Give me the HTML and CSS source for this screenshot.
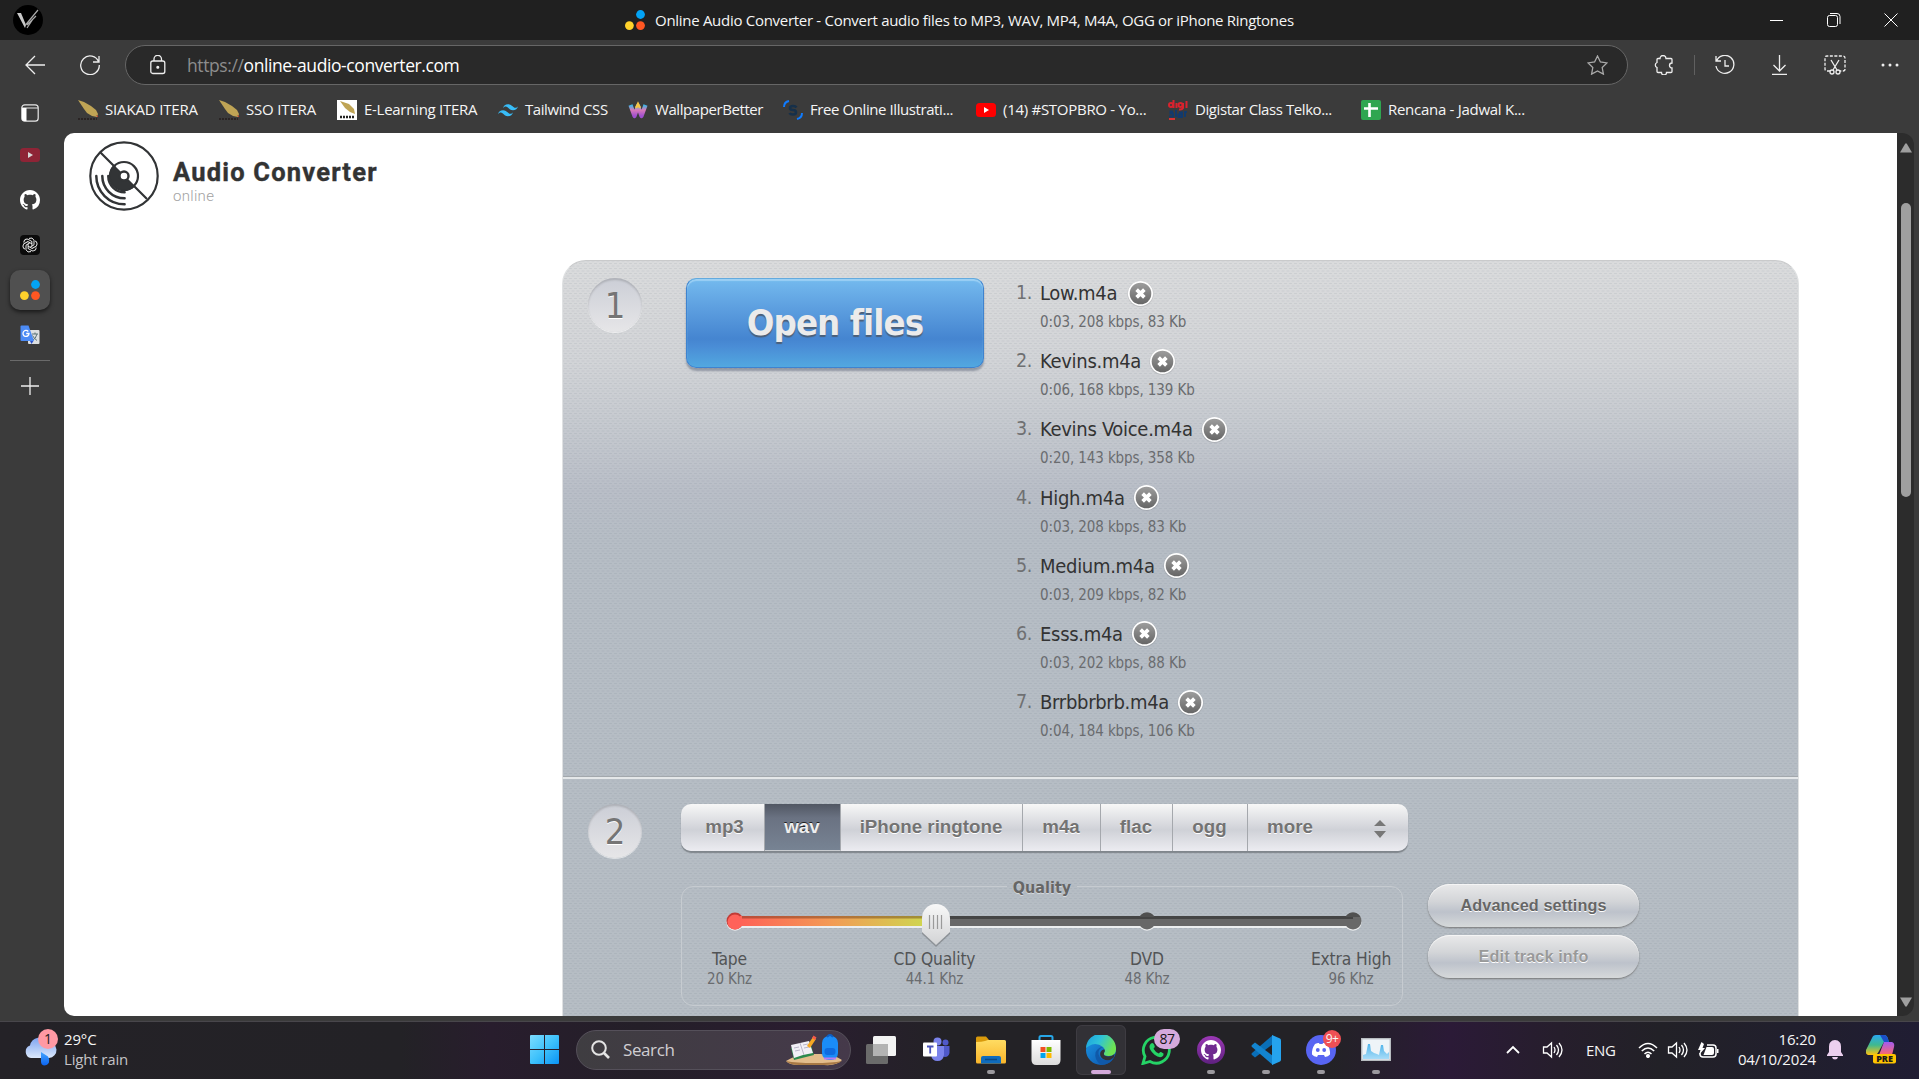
FILE: index.html
```html
<!DOCTYPE html>
<html lang="en">
<head>
<meta charset="utf-8">
<title>Online Audio Converter</title>
<link rel="stylesheet" href="styles.css">
</head>
<body>
<svg width="0" height="0" class="defs">
  <defs>
    <linearGradient id="closeFill" x1="0" y1="0" x2="0" y2="1"><stop offset="0" stop-color="#9d9d9d"/><stop offset="1" stop-color="#666"/></linearGradient>
    <linearGradient id="winFill" x1="0" y1="0" x2="1" y2="1"><stop offset="0" stop-color="#7ddcff"/><stop offset=".5" stop-color="#3fc2fb"/><stop offset="1" stop-color="#0a93f5"/></linearGradient>
    <linearGradient id="cloudFill" x1="0" y1="0" x2="0" y2="1"><stop offset="0" stop-color="#7ea4f0"/><stop offset="1" stop-color="#dbe8fb"/></linearGradient>
    <linearGradient id="dropFill" x1="0" y1="0" x2="0" y2="1"><stop offset="0" stop-color="#43a5ff"/><stop offset="1" stop-color="#0b63f0"/></linearGradient>
    <linearGradient id="folderFill" x1="0" y1="0" x2="0" y2="1"><stop offset="0" stop-color="#ffdc62"/><stop offset="1" stop-color="#f9b52a"/></linearGradient>
    <linearGradient id="storeFill" x1="0" y1="0" x2="0" y2="1"><stop offset="0" stop-color="#fff"/><stop offset="1" stop-color="#dcdcdc"/></linearGradient>
    <linearGradient id="edgeTop" x1="0" y1="0" x2="1" y2=".4"><stop offset="0" stop-color="#1a9ee0"/><stop offset=".5" stop-color="#2fc3d8"/><stop offset="1" stop-color="#6ee453"/></linearGradient>
    <linearGradient id="edgeLow" x1="0" y1="0" x2="1" y2="1"><stop offset="0" stop-color="#1b98e6"/><stop offset="1" stop-color="#0c4fa8"/></linearGradient>
    <linearGradient id="wpFill" x1="0" y1="0" x2="0" y2="1"><stop offset="0" stop-color="#35b8e8"/><stop offset=".45" stop-color="#d97ab9"/><stop offset="1" stop-color="#a04fd0"/></linearGradient>
    <linearGradient id="handleFill" x1="0" y1="0" x2="0" y2="1"><stop offset="0" stop-color="#f8f8f8"/><stop offset="1" stop-color="#d2d3d5"/></linearGradient>
    <linearGradient id="coA" x1="0" y1="0" x2="0" y2="1"><stop offset="0" stop-color="#2aa8f0"/><stop offset=".5" stop-color="#3fb98f"/><stop offset="1" stop-color="#ffc20e"/></linearGradient>
    <linearGradient id="coB" x1="0" y1="0" x2="0" y2="1"><stop offset="0" stop-color="#a25bf0"/><stop offset="1" stop-color="#ff6a6a"/></linearGradient>
    <linearGradient id="chartFill" x1="0" y1="0" x2="0" y2="1"><stop offset="0" stop-color="#4fb4ea"/><stop offset="1" stop-color="#a8dcf8"/></linearGradient>
    <linearGradient id="ghFill" x1="0" y1="0" x2="0" y2="1"><stop offset="0" stop-color="#9b38b5"/><stop offset="1" stop-color="#5f2180"/></linearGradient>
    <symbol id="cat" viewBox="0 0 16 16"><path d="M8 0C3.58 0 0 3.58 0 8c0 3.54 2.29 6.53 5.47 7.59.4.07.55-.17.55-.38 0-.19-.01-.82-.01-1.49-2.01.37-2.53-.49-2.69-.94-.09-.23-.48-.94-.82-1.13-.28-.15-.68-.52-.01-.53.63-.01 1.08.58 1.23.82.72 1.21 1.87.87 2.33.66.07-.52.28-.87.51-1.07-1.78-.2-3.64-.89-3.64-3.95 0-.87.31-1.59.82-2.15-.08-.2-.36-1.02.08-2.12 0 0 .67-.21 2.2.82.64-.18 1.32-.27 2-.27s1.36.09 2 .27c1.53-1.04 2.2-.82 2.2-.82.44 1.1.16 1.92.08 2.12.51.56.82 1.27.82 2.15 0 3.07-1.87 3.75-3.65 3.95.29.25.54.73.54 1.48 0 1.07-.01 1.93-.01 2.2 0 .21.15.46.55.38A8.01 8.01 0 0 0 16 8c0-4.42-3.58-8-8-8z"/></symbol>
    <symbol id="dots" viewBox="0 0 20 20"><circle cx="15.500" cy="4.500" r="4.400" fill="#03a3f5"/><circle cx="4.400" cy="15.600" r="4.400" fill="#ffd22b"/><circle cx="15.500" cy="15.600" r="4.400" fill="#ff5722"/></symbol>
    <symbol id="feather" viewBox="0 0 20 20"><path d="M0 0 6 2l7 4 5 4 2 4-1 3-5-1-5-3-3-4z" fill="#bfa455"/><path d="M18.600 15.400 20 17" stroke="#c33" stroke-width="1"/><path d="M0 19h19" stroke="#2a2424" stroke-width="2" stroke-dasharray="2 1"/></symbol>
    <symbol id="play" viewBox="0 0 20 14"><rect width="20" height="14" rx="3.500"/><path d="m8 4 5 3-5 3z" fill="#fff"/></symbol>
    <symbol id="remove" viewBox="0 0 28 28"><circle cx="14" cy="14.500" r="13.500" fill="#000" opacity=".1"/><circle cx="14" cy="14" r="13" fill="#fff"/><circle cx="14" cy="14" r="11.200" fill="url(#closeFill)"/><path d="m10 10 8 8m0-8-8 8" stroke="#fff" stroke-width="3.800"/></symbol>
    <symbol id="volume" viewBox="0 0 20 18"><path d="M1 6h3.500L9 2v14l-4.500-4H1z"/><path d="M11.500 6q2 3 0 6M14 4q4 5 0 10M16.500 2q6 7 0 14"/></symbol>
  </defs>
</svg>

<header class="titlebar">
  <svg class="avatar" viewBox="0 0 30 30"><circle cx="15" cy="15" r="15" fill="#000"/><path d="M4 8h4l5 12-1 3z" fill="#c9c9c9"/><path d="M12.500 20 25 5M14 20l9-9M14 23l6-9" stroke="#aaa" stroke-width="1.200" fill="none"/></svg>
  <div class="tab-title"><svg width="20" height="20"><use href="#dots"/></svg><span class="t-title">Online Audio Converter - Convert audio files to MP3, WAV, MP4, M4A, OGG or iPhone Ringtones</span></div>
  <div class="window-controls">
    <svg width="14" height="14" viewBox="0 0 14 14"><path d="M0 7.500h13"/></svg>
    <svg width="14" height="14" viewBox="0 0 14 14"><rect x=".5" y="2.500" width="10" height="11" rx="2"/><path d="M3 .5h7q3 0 3 3V11"/></svg>
    <svg width="14" height="14" viewBox="0 0 14 14"><path d="m.5.500 13 13m0-13-13 13"/></svg>
  </div>
</header>

<div class="toolbar">
  <svg class="line-icon back" width="20" height="20" viewBox="0 0 20 20"><path d="M20 10H1m9-9-9 9 9 9"/></svg>
  <svg class="line-icon reload" width="20" height="20" viewBox="0 0 20 20"><path d="M18.700 7A9.300 9.300 0 1 0 19.300 10M19 1v6h-6"/></svg>
  <div class="address">
    <svg class="line-icon" width="16" height="20" viewBox="0 0 16 20"><rect x=".8" y="6" width="14" height="12.500" rx="2"/><path d="M4 6V4a3.700 3.700 0 0 1 7.500 0v2"/><circle cx="7.800" cy="12.300" r=".9" fill="#eee"/></svg>
    <span class="url"><span class="scheme">https://</span><span class="host">online-audio-converter.com</span></span>
    <svg class="line-icon star" width="21" height="20" viewBox="0 0 21 20"><path d="m10.500 1 2.900 6 6.600.9-4.800 4.600 1.200 6.600-5.900-3.200-5.900 3.200 1.200-6.600L1 7.900 7.600 7z"/></svg>
  </div>
  <div class="actions">
    <svg class="line-icon" width="20" height="20" viewBox="0 0 20 20"><path d="M6 3.500a3 3 0 0 1 6 0h5q1 0 1 1V8a2.500 2.500 0 0 0 0 5v3.500q0 1-1 1h-4.500a2.500 2.500 0 0 1-5 0H4q-1 0-1-1V12.500a2.700 2.700 0 0 1 0-5V4.500q0-1 1-1z"/></svg>
    <i class="sep"></i>
    <svg class="line-icon" width="22" height="20" viewBox="0 0 22 20"><path d="M2 1v5h5M2.500 6A9 9 0 1 1 2 11M11 5v6h4"/></svg>
    <svg class="line-icon" width="20" height="20" viewBox="0 0 20 20"><path d="M9.500 0v16m-6-6 6 6 6-6M2 19.300h15"/></svg>
    <svg class="line-icon" width="22" height="20" viewBox="0 0 22 20"><path d="M6 16H3q-2 0-2-2V3q0-2 2-2h16q2 0 2 2v11q0 2-2 2h-3" stroke-dasharray="3 1.500"/><path d="m7 5 6 10m2-10-6 10"/><circle cx="8" cy="17" r="2"/><circle cx="14" cy="17" r="2"/></svg>
    <svg width="20" height="20" viewBox="0 0 20 20" fill="#eee"><circle cx="3" cy="10" r="1.500"/><circle cx="10" cy="10" r="1.500"/><circle cx="17" cy="10" r="1.500"/></svg>
  </div>
</div>

<div class="browser-body">
  <aside class="sidebar">
    <svg class="side-item" width="18" height="18" viewBox="0 0 18 18"><rect x=".8" y=".8" width="16.400" height="16.400" rx="3" fill="none" stroke="#e8e8e8" stroke-width="1.200"/><path d="M1 4h16" stroke="#e8e8e8"/><path d="M1 4h4.500v13H3q-2 0-2-2z" fill="#fff"/></svg>
    <svg class="side-item yt-dim" width="20" height="14"><use href="#play"/></svg>
    <svg class="side-item" width="20" height="20" fill="#fff"><use href="#cat"/></svg>
    <svg class="side-item" width="20" height="20" viewBox="0 0 20 20"><rect width="20" height="20" rx="4" fill="#0b0b0b"/><g fill="none" stroke="#eee" stroke-width="1"><path id="petal" d="M9 3.400q3.500-1.600 5 1.800v4.600L10 12.300"/><use href="#petal" transform="rotate(60 10 10)"/><use href="#petal" transform="rotate(120 10 10)"/><use href="#petal" transform="rotate(180 10 10)"/><use href="#petal" transform="rotate(240 10 10)"/><use href="#petal" transform="rotate(300 10 10)"/></g></svg>
    <div class="side-active"><svg width="20" height="20"><use href="#dots"/></svg></div>
    <svg class="side-item" width="20" height="20" viewBox="0 0 20 20"><rect x="8" y="5" width="11.500" height="14" rx="1" fill="#dcdfe1"/><path d="M12 9h6m-3-1.500V9m2 0q-1 5-5 6.500m.5-5q1.500 3 4.500 5" stroke="#5b7377" fill="none"/><path d="M1.500.500h7L14 16H1.500q-1 0-1-1V1.500q0-1 1-1z" fill="#4c8bf5"/><path d="m10 16 3.500 0-2 3z" fill="#2b50c8"/><path d="M8.300 6.500A3 3 0 1 0 9 8.500H6.200" stroke="#fff" stroke-width="1.300" fill="none"/></svg>
    <i class="side-rule"></i>
    <svg class="side-item line-icon" width="18" height="18" viewBox="0 0 18 18"><path d="M9 0v18M0 9h18"/></svg>
  </aside>

  <div class="main-col">
    <nav class="bookmarks">
      <a class="bm w141"><svg width="20" height="20"><use href="#feather"/></svg><span class="itera">SIAKAD ITERA</span></a>
      <a class="bm w118"><svg width="20" height="20"><use href="#feather"/></svg><span class="itera">SSO ITERA</span></a>
      <a class="bm w161"><svg width="20" height="20" viewBox="0 0 20 20"><rect width="20" height="20" fill="#fff"/><path d="m3 1 9 3 5 5 1 5-5-2-5-4z" fill="#bfa455"/><path d="M3 17h14" stroke="#222" stroke-width="2.500" stroke-dasharray="2 1"/></svg><span class="mid">E-Learning ITERA</span></a>
      <a class="bm w130"><svg width="20" height="20" viewBox="0 0 24 24" fill="#38bdf8"><path d="M12 5C8.800 5 6.800 6.600 6 9.800c1.200-1.600 2.600-2.200 4.200-1.800.91.23 1.570.89 2.290 1.620C13.670 10.800 15.030 12.200 18 12.200c3.200 0 5.200-1.600 6-4.800-1.200 1.600-2.600 2.200-4.200 1.800-.91-.23-1.570-.89-2.290-1.620C16.330 6.400 14.970 5 12 5zM6 12.200c-3.200 0-5.200 1.600-6 4.800 1.200-1.600 2.600-2.200 4.200-1.800.91.230 1.570.89 2.290 1.620C7.670 18 9.030 19.400 12 19.400c3.200 0 5.200-1.600 6-4.800-1.200 1.600-2.600 2.200-4.200 1.800-.91-.23-1.570-.89-2.290-1.620C10.330 13.600 8.970 12.200 6 12.200z"/></svg><span>Tailwind CSS</span></a>
      <a class="bm w155"><svg width="20" height="20" viewBox="0 0 20 20"><path d="m2.500 5 4 11L10 6l3.500 10 4-11" fill="none" stroke="url(#wpFill)" stroke-width="4.200" stroke-linejoin="round"/><path d="m8 8 2-4 2 4" stroke="#f6c445" stroke-width="2.500" fill="none"/></svg><span>WallpaperBetter</span></a>
      <a class="bm w193"><svg width="20" height="20" viewBox="0 0 20 20" fill="none"><path d="M1 7q0-5 5-6M19 13q0 5-5 6" stroke="#0f7bff" stroke-width="2"/><path d="M13.500 7.500Q12.500 6 10 6q-3 0-3 2t3 2 3 2.200T10 14.500q-2.700 0-3.500-1.500" stroke="#16304a" stroke-width="2.600"/></svg><span>Free Online Illustrati...</span></a>
      <a class="bm w192"><svg width="20" height="14" fill="#f00"><use href="#play"/></svg><span class="mid">(14) #STOPBRO - Yo...</span></a>
      <a class="bm w193"><svg width="20" height="20" viewBox="0 0 20 20" fill="none"><g stroke="#d9232e" stroke-width="2"><circle cx="3" cy="5" r="2"/><path d="M5.500 0v8M8.500 3v5"/><circle cx="12.500" cy="5" r="2"/><path d="M15 3v5q-1 2-4 1.500M18.500 1v7"/></g><path d="M5 11.500H2.500v2H5v3H1M8 10v7M11 12.500h3V17h-3.500v-2.500H14M17 17v-5h2" stroke="#123a6c" stroke-width="2"/><path d="M1 19h6" stroke="#f33" stroke-width="1.600"/></svg><span>Digistar Class Telko...</span></a>
      <a class="bm"><svg width="20" height="20" viewBox="0 0 20 20"><rect width="20" height="20" rx="2" fill="#2fa650"/><path d="M8.500 3v14M3 8.500h14" stroke="#fff" stroke-width="2.600"/></svg><span class="mid">Rencana - Jadwal K...</span></a>
    </nav>

    <div class="view">
      <main class="page">
        <div class="brand">
          <svg width="70" height="70" viewBox="0 0 70 70" fill="none" stroke="#323436" stroke-width="2.200"><circle cx="35" cy="35" r="33.700"/><path d="m11 11 15 15m19 19 13 13"/><circle cx="35" cy="35" r="14"/><path d="m25 25 20 20A14 14 0 0 1 25 25z" fill="#323436" stroke-width="1.500"/><circle cx="35" cy="35" r="4.500" fill="#fff" stroke-width="2.400"/><path d="M7.300 35A28.300 28.300 0 0 0 35.600 63.300M13.300 35A22.300 22.300 0 0 0 35.600 57.300M19.300 35A16.300 16.300 0 0 0 35.600 51.300" stroke-width="2.500" stroke-linecap="round"/></svg>
          <div><h1>Audio Converter</h1><p>online</p></div>
        </div>

        <section class="panel">
          <div class="step step-one">
            <div class="num">1</div>
            <button class="open">Open files</button>
            <ol class="files">
              <li><b>1.</b><div><p class="name first"><span>Low.m4a</span><svg width="27" height="27"><use href="#remove"/></svg></p><p class="info">0:03, 208 kbps, 83 Kb</p></div></li>
              <li><b>2.</b><div><p class="name"><span>Kevins.m4a</span><svg width="27" height="27"><use href="#remove"/></svg></p><p class="info">0:06, 168 kbps, 139 Kb</p></div></li>
              <li><b>3.</b><div><p class="name"><span>Kevins Voice.m4a</span><svg width="27" height="27"><use href="#remove"/></svg></p><p class="info">0:20, 143 kbps, 358 Kb</p></div></li>
              <li><b>4.</b><div><p class="name"><span>High.m4a</span><svg width="27" height="27"><use href="#remove"/></svg></p><p class="info">0:03, 208 kbps, 83 Kb</p></div></li>
              <li><b>5.</b><div><p class="name"><span>Medium.m4a</span><svg width="27" height="27"><use href="#remove"/></svg></p><p class="info">0:03, 209 kbps, 82 Kb</p></div></li>
              <li><b>6.</b><div><p class="name"><span>Esss.m4a</span><svg width="27" height="27"><use href="#remove"/></svg></p><p class="info">0:03, 202 kbps, 88 Kb</p></div></li>
              <li><b>7.</b><div><p class="name"><span>Brrbbrbrb.m4a</span><svg width="27" height="27"><use href="#remove"/></svg></p><p class="info">0:04, 184 kbps, 106 Kb</p></div></li>
            </ol>
          </div>
          <div class="step step-two">
            <div class="num">2</div>
            <div class="settings">
              <div class="formats">
                <a class="c84">mp3</a><a class="c76 on">wav</a><a class="c182">iPhone ringtone</a><a class="c78">m4a</a><a class="c72">flac</a><a class="c75">ogg</a>
                <a class="more"><span>more</span><svg width="14" height="18" viewBox="0 0 14 18"><path d="m1 6 6-6 6 6zM1 11h12l-6 7z" fill="#777"/></svg></a>
              </div>
              <div class="quality-row">
                <fieldset class="quality">
                  <legend>Quality</legend>
                  <svg class="slider" width="640" height="44" viewBox="0 0 640 44">
                    <defs><linearGradient id="heat" gradientUnits="userSpaceOnUse" x1="10" y1="0" x2="200" y2="0"><stop offset="0" stop-color="#ff5f57"/><stop offset=".5" stop-color="#f39a55"/><stop offset="1" stop-color="#cfd650"/></linearGradient></defs>
                    <g fill="#eceeef"><circle cx="10" cy="18.200" r="8.500"/><circle cx="422" cy="18.200" r="8.500"/><circle cx="628" cy="18.200" r="8.500"/><rect x="10" y="14" width="618" height="10"/></g>
                    <g fill="#686868"><circle cx="422" cy="17" r="8.500"/><circle cx="628" cy="17" r="8.500"/><rect x="200" y="12" width="428" height="10"/></g>
                    <rect x="200" y="12" width="428" height="3" fill="#444"/>
                    <path d="M414.500 13a8.500 8.500 0 0 1 15 0zM620.500 13a8.500 8.500 0 0 1 15 0z" fill="#505050"/>
                    <circle cx="10" cy="17" r="8.500" fill="#c23b36"/><circle cx="10" cy="18" r="7.500" fill="#ff625a"/>
                    <rect x="15" y="12" width="190" height="10" fill="url(#heat)"/><rect x="17" y="12" width="188" height="2.500" fill="#5c2a10" opacity=".4"/>
                    <path d="M197 30V15a14 14 0 0 1 28 0v15l-14 13z" fill="#333" opacity=".3"/>
                    <path d="M197 28V14a14 14 0 0 1 28 0v14l-14 13z" fill="url(#handleFill)"/>
                    <path d="M204.500 11v14M208.500 11v14M212.500 11v14M216.500 11v14" stroke="#9a9a9a" stroke-width="1.200"/>
                  </svg>
                  <div class="marks"><div>Tape<small>20 Khz</small></div><div>CD Quality<small>44.1 Khz</small></div><div>DVD<small>48 Khz</small></div><div>Extra High<small>96 Khz</small></div></div>
                </fieldset>
                <div class="buttons"><button>Advanced settings</button><button disabled>Edit track info</button></div>
              </div>
            </div>
          </div>
        </section>
      </main>
      <div class="scrollbar"><svg width="12" height="10" viewBox="0 0 12 10"><path d="M5 1Q6-.5 7 1l5 8.500H0z" fill="#9f9f9f"/></svg><i></i><svg width="12" height="10" viewBox="0 0 12 10"><path d="M5 9Q6 10.500 7 9l5-8.500H0z" fill="#9f9f9f"/></svg></div>
    </div>
  </div>
</div>

<footer class="taskbar">
  <div class="weather">
    <svg width="36" height="38" viewBox="0 0 36 38"><path d="M7 29a6.500 6.500 0 0 1-1-12.500A10 10 0 0 1 24 13a8 8 0 0 1 1 16z" fill="url(#cloudFill)"/><path d="m17 23 7 4.500q2 2.500 1 6-1.500 3-5 3-3-.5-3-4z" fill="url(#dropFill)"/><circle cx="24" cy="10" r="10" fill="#ff99a4"/><text x="24" y="15" font-size="14" text-anchor="middle" fill="#222">1</text></svg>
    <div><span>29°C</span><span class="cond">Light rain</span></div>
  </div>
  <svg class="start" width="29" height="29" viewBox="0 0 29 29" fill="url(#winFill)"><path d="M1 0h13v14H0V1q0-1 1-1zM15 0h13q1 0 1 1v13H15zM0 15h14v14H1q-1 0-1-1zM15 15h14v13q0 1-1 1H15z"/></svg>
  <div class="search">
    <svg width="20" height="20" viewBox="0 0 20 20" fill="none" stroke="#e4e4e4" stroke-width="2"><circle cx="8" cy="8" r="6.800"/><path d="m13 13 5 5" stroke-width="2.600"/></svg>
    <span>Search</span>
    <svg class="beach" width="58" height="32" viewBox="0 0 58 32"><path d="M1 27q12-8 30-7 17-1 26 6-5 6-18 5H14Q4 31 1 27z" fill="#e3bd8c"/><path d="M1 27q4 4 13 4h25q13 0 18-4-10 2-28 2T1 27z" fill="#a87945"/><path d="m6 14 3 12 20-5-4-13z" fill="#2c8a4e"/><path d="m6 11 9-2 9-2 4 12-10 2-9 3z" fill="#f1eff6"/><path d="m15 9 4 12M9 14l5-1M10 17l5-1M18 11l5-1M19 14l5-1" stroke="#b9b4c8"/><path d="m22 12 6-9 3 2-6 9z" fill="#f6a723"/><path d="m27 4 1.500-2.500 3 2L30 6z" fill="#f25a4a"/><rect x="37" y="2" width="16" height="24" rx="7" fill="#1a8cf8"/><path d="M42 3q3-4 6 0" stroke="#0d5fc4" stroke-width="2" fill="none"/><rect x="39.500" y="14" width="11" height="7" rx="3" fill="#0f6be0"/><path d="M39 24.500h12" stroke="#b77cf3" stroke-width="2"/></svg>
  </div>
  <div class="apps">
    <div class="app"><svg width="30" height="28" viewBox="0 0 30 28"><rect x="0" y="8" width="22" height="20" rx="1.500" fill="#6b6b6b"/><rect x="7" y="0" width="23" height="20" rx="1.500" fill="#f3f3f3"/><path d="M7 8h15v12H8.500Q7 20 7 18.500z" fill="#b3b3b3"/></svg></div>
    <div class="app"><svg width="28" height="26" viewBox="0 0 28 26"><circle cx="15.500" cy="4.500" r="4" fill="#7b83eb"/><circle cx="23.500" cy="5.500" r="3" fill="#5059c9"/><path d="M19 9h8.500v7q-1 4-4.500 4-3 0-4-2z" fill="#5059c9"/><path d="M10 9h12v9q-1 6-6.500 6T9 18z" fill="#7b83eb"/><rect x="1" y="5.500" width="14" height="14" rx="1" fill="#fff"/><path d="M5 9.500h6.500M8.200 9.500v7" stroke="#4b53bc" stroke-width="1.800"/></svg></div>
    <div class="app run"><svg width="30" height="28" viewBox="0 0 30 28"><path d="M0 2q0-1.500 1.500-1.500H10L13 4v5H0z" fill="#d99a0b"/><path d="M0 6q6 0 9-1l3-1h16.500Q30 4 30 5.500V26q0 1.500-1.500 1.500h-27Q0 27.500 0 26z" fill="url(#folderFill)"/><path d="M5 27.500V22q0-2 2-2h16q2 0 2 2v5.500z" fill="#0f6cbd"/><path d="M9 23.500h12" stroke="#0a4a86" stroke-width="1.500"/></svg></div>
    <div class="app"><svg width="30" height="30" viewBox="0 0 30 30"><path d="M8.500 8V2.500q0-1.500 1.500-1.500h10q1.500 0 1.500 1.500V8" stroke="#27a7e8" stroke-width="2" fill="none"/><path d="M.5 5h29v20q0 5-5 5h-19q-5 0-5-5z" fill="url(#storeFill)"/><path d="M9.500 12h5v5h-5z" fill="#f25022"/><path d="M15.500 12h5v5h-5z" fill="#7fba00"/><path d="M9.500 18h5v5h-5z" fill="#00a4ef"/><path d="M15.500 18h5v5h-5z" fill="#ffb900"/></svg></div>
    <div class="app active"><svg width="30" height="30" viewBox="0 0 30 30"><circle cx="15" cy="15" r="15" fill="url(#edgeLow)"/><path d="M0 13A15 15 0 0 1 30 14.500q0 6-7 6.500-6 .2-5-3 2-3-1-6Q12 8 6 9.500 2 11 0 13z" fill="url(#edgeTop)"/><path d="M17 12q-5 2-4.500 7 1.500 7 9.500 6.500 4-.5 6-3-4 7.500-13 7.500Q8 25 9.500 17.500 12 12 17 12z" fill="#1059a9"/><path d="M18 18q-1 3 4 3.500 4 0 6.500-2.500l-.8 3.500Q23 27 17 24q-4-3-2.500-7 1.500-3 4-2.500 1 1-.5 3.500z" fill="#323136"/></svg></div>
    <div class="app"><svg width="30" height="30" viewBox="0 0 30 30" fill="none"><path d="M2 28.500 4 21.500A13 13 0 1 1 9 26.500z" stroke="#25d366" stroke-width="2.800"/><path d="M10 8.500q2-1.500 3 1l.8 2q0 1-1.300 2.300 2 3.500 5.300 4.700 1.200-2 2.200-1.500l2.500 1.500q.6 2-1.500 3.200-3 1.500-7.500-2Q8 15 8.500 11q.3-1.500 1.500-2.500z" fill="#25d366"/></svg><span class="badge big">87</span></div>
    <div class="app run"><svg width="28" height="28" viewBox="0 0 28 28"><circle cx="14" cy="14" r="14" fill="url(#ghFill)"/><circle cx="14" cy="14" r="10" fill="#6f2a90"/><use href="#cat" x="4" y="4" width="20" height="20" fill="#fff"/></svg></div>
    <div class="app run"><svg width="30" height="30" viewBox="0 0 30 30"><path d="m1 20 3 2.500L22 9V0L1 18q-1 1 0 2z" fill="#0a6fb8"/><path d="m1 10 3-2.500L22 21v9L1 12q-1-1 0-2z" fill="#1384cf"/><path d="m21 0 8 3.500q1 .5 1 2v19q0 1.500-1 2L21 30z" fill="#25a3ee"/></svg></div>
    <div class="app run"><svg width="30" height="30" viewBox="0 0 30 30"><circle cx="15" cy="15" r="15" fill="#5865f2"/><path d="M9 9q3-1.500 4-1l.5 1h3l.5-1q1-.5 4 1 3.500 5 3 10.500-2 2-5 2.500l-1-2h-6l-1 2q-3-.5-5-2.500Q5.500 14 9 9z" fill="#fff"/><circle cx="11.800" cy="15" r="1.900" fill="#5865f2"/><circle cx="18.200" cy="15" r="1.900" fill="#5865f2"/></svg><span class="badge red">9+</span></div>
    <div class="app run"><svg width="30" height="23" viewBox="0 0 30 23"><rect x=".7" y=".7" width="28.600" height="21.600" fill="#eef4f8" stroke="#b7bcc0" stroke-width="1.400"/><path d="M2 21v-4l3-1 2-10h2l1 7 3 2 3 1 2 1 2-10 2 0 1 6 3 3 2-2v7z" fill="url(#chartFill)"/></svg></div>
  </div>
  <div class="tray">
    <svg class="chev" width="14" height="9" viewBox="0 0 14 9"><path d="m1 8 6-6 6 6" fill="none" stroke="#fff" stroke-width="1.800"/></svg>
    <svg class="vol1 sound" width="21" height="18"><use href="#volume"/></svg>
    <span class="lang">ENG</span>
    <svg class="wifi" width="20" height="16" viewBox="0 0 20 16" fill="none" stroke="#fff" stroke-width="1.500"><path d="M1 6q9-9 18 0M3.800 9q6.200-6 12.400 0M6.500 12q3.500-3.500 7 0"/><circle cx="10" cy="14" r="1.300" fill="#fff"/></svg>
    <svg class="vol2 sound" width="21" height="18"><use href="#volume"/></svg>
    <svg class="bat" width="21" height="18" viewBox="0 0 21 18"><path d="M9 4h6q3 0 3 3v6q0 3-3 3H5q-3 0-3-3v-1" fill="none" stroke="#fff" stroke-width="1.500"/><path d="M8.500 6H14q2 0 2 2v4q0 2-2 2H5.500z" fill="#fff"/><path d="M19 8h1.500v4H19zM3.500 1 0 9h2.500L1 14l6-7H4.500L6 3z" fill="#fff"/></svg>
    <div class="clock"><span>16:20</span><span>04/10/2024</span></div>
    <svg class="bell" width="16" height="20" viewBox="0 0 16 20"><path d="M8 0q6 .5 6 6.500V12l2 3v1H0v-1l2-3V6.500Q2 .5 8 0zM5 17h6q-.5 2.500-3 2.500T5 17z" fill="#ecd0ef"/></svg>
    <svg class="pre" width="30" height="29" viewBox="0 0 30 29"><path d="M6 3q1-3 4-3h8q3 0 4 4l1 3h-5l-5 9q-2 4-4 4H2q-3-1-2-5z" fill="url(#coA)"/><path d="M14 0h4q3 0 4 4l1 3h-5z" fill="#1b4fc9"/><path d="m18 7 8 0q3 1 2 5l-2 8H13z" fill="url(#coB)"/><rect x="7" y="19" width="23" height="9.500" rx="2" fill="#ffc400"/><text x="18.500" y="27" font-size="9" font-weight="800" text-anchor="middle" fill="#1a1a1a">PRE</text></svg>
  </div>
</footer>
</body>
</html>
```
FILE: styles.css
```css
* { box-sizing: border-box; }
html, body { margin: 0; height: 1079px; overflow: hidden; }
body { width: 1919px; background: #3b3b3b; color: #f5f5f5; display: flex; flex-direction: column; font: 15px/20px "Open Sans", "Noto Sans", sans-serif; }
p, h1, ol { margin: 0; padding: 0; }
svg { display: block; flex: none; }
span { white-space: nowrap; }
.defs { position: absolute; }
.line-icon { fill: none; stroke: #eee; stroke-width: 1.3; }

.titlebar { height: 40px; background: #202020; display: flex; align-items: center; flex: none; padding-left: 13px; }
.avatar { width: 30px; height: 30px; }
.tab-title { margin-left: 582px; display: flex; align-items: center; gap: 10px; width: 700px; }
.t-title { letter-spacing: -.29px; }
.window-controls { margin-left: auto; display: flex; width: 171px; justify-content: space-around; fill: none; stroke: #fff; }

.toolbar { height: 50px; display: flex; align-items: center; padding: 0 0 0 25px; flex: none; }
.reload { margin-left: 35px; }
.address { margin-left: 25px; width: 1503px; height: 40px; border: 1px solid #666; border-radius: 20px; background: #292929; display: flex; align-items: center; padding: 0 19px 0 24px; }
.url { margin-left: 21px; font-size: 17.5px; letter-spacing: -.4px; padding-bottom: 1px; }
.scheme { color: #8d8d8d; }
.host { color: #fff; }
.star { margin-left: auto; stroke: #aaa; }
.actions { display: flex; align-items: center; margin-left: 26px; gap: 34px; }
.sep { width: 1px; height: 20px; background: #606060; margin: 0 -15px 0 -14px; }

.browser-body { flex: 1; display: flex; min-height: 0; }
.sidebar { width: 64px; display: flex; flex-direction: column; align-items: center; padding: 14px 5px 0 0; }
.side-item { margin-bottom: 25px; }
.sidebar .side-item:nth-child(1) { margin-bottom: 26px; }
.sidebar .side-item:nth-child(2) { margin-bottom: 28px; }
.yt-dim { fill: #a31f35; opacity: .8; }
.sidebar .side-item:nth-child(4) { margin-bottom: 15px; }
.side-active { width: 40px; height: 40px; border-radius: 10px; background: #505050; display: grid; place-items: center; box-shadow: 0 2px 4px rgba(0,0,0,.6); margin-bottom: 15px; }
.sidebar .side-item:nth-child(6) { margin-bottom: 15px; }
.side-rule { width: 40px; height: 1px; background: #6a6a6a; margin-bottom: 16px; }
.main-col { flex: 1; display: flex; flex-direction: column; }
.bookmarks { height: 43px; padding: 0 0 3px 14px; display: flex; }
.bm { display: flex; align-items: center; gap: 7px; }
.w141 { width: 141px; } .w118 { width: 118px; } .w161 { width: 161px; } .w130 { width: 130px; } .w155 { width: 155px; } .w192 { width: 192px; } .w193 { width: 193px; }
.bm span { letter-spacing: -.42px; padding-bottom: 2px; }
.bm .itera { letter-spacing: -.17px; }
.bm .mid { letter-spacing: -.28px; }
.view { height: 883px; display: flex; width: 1850px; border-radius: 10px 12px 12px 10px; overflow: hidden; }
.page { width: 1833px; background: #fff; color: #333; }
.scrollbar { flex: 1; background: #2c2c2c; display: flex; flex-direction: column; align-items: center; padding: 10px 0 9px 1px; justify-content: space-between; }
.scrollbar i { width: 10px; height: 294px; border-radius: 5px; background: #9f9f9f; margin: 50px 0 auto; }

.brand { height: 127px; padding: 8px 0 0 25px; display: flex; gap: 14px; font-family: Roboto, sans-serif; }
.brand h1 { font-size: 25.5px; line-height: 30px; font-weight: 700; letter-spacing: 1.2px; -webkit-text-stroke: .4px #323436; margin-top: 16px; white-space: nowrap; }
.brand p { font-size: 15px; line-height: 18px; color: #a2a2a2; font-weight: 300; letter-spacing: .3px; }

.panel { margin-left: 498px; width: 1237px; height: 760px; border: 1px solid #dfe1e2; border-top-color: #c9cacb; border-radius: 24px 24px 0 0; overflow: hidden; font-family: "DejaVu Sans Condensed", "DejaVu Sans", sans-serif; font-stretch: condensed;
  background:
    radial-gradient(ellipse 1.6px 1px, rgba(70,85,105,.09) 0 60%, transparent) 0 0 / 5px 5px,
    radial-gradient(ellipse 1.6px 1px, rgba(70,85,105,.09) 0 60%, transparent) 2.5px 2.5px / 5px 5px,
    linear-gradient(#dadbdc 0, #d2d4d7 100px, #b9bec7 230px, #b6bdc5 280px, #b6bdc4 100%); }
.step { display: flex; }
.step-one { height: 516px; padding: 17px 0 0 25px; border-bottom: 1px solid #a3a8ad; }
.step-two { border-top: 2px solid #e4e7e9; height: 245px; padding: 25px 0 0 25px; }
.num { width: 54px; height: 54px; border-radius: 50%; background: linear-gradient(#cbced6, #e6e6e8); box-shadow: inset 0 2px 2px rgba(0,0,0,.15), 0 1px 0 rgba(255,255,255,.6); font-size: 36px; line-height: 55px; text-align: center; color: #757575; text-shadow: 0 1px 0 #fff; }
.open { margin: 0 0 0 44px; width: 298px; height: 90px; border: 1px solid #3f83cf; border-top-color: #63aade; border-radius: 10px; font: bold 36.2px "DejaVu Sans Condensed", "DejaVu Sans", sans-serif; font-stretch: condensed; letter-spacing: -.9px; padding: 0 0 1px; color: #ebebeb; text-shadow: 0 2px 1px #4b5f78; white-space: nowrap; background: linear-gradient(#74baee, #5d9fe0 33%, #4585d0 68%, #4a8dd6 77%, #52a8e0); box-shadow: inset 0 2px 1px #9cd0f4, 0 3px 2px rgba(90,100,120,.5); }
.files { list-style: none; margin-left: 32px; padding-top: 1px; }
.files li { height: 68.2px; display: flex; }
.files b { font-weight: 400; color: #6f7072; font-size: 19.5px; line-height: 28px; width: 24px; }
.name { display: flex; height: 28px; align-items: center; gap: 8px; font-size: 20px; color: #333; }
.first { gap: 10px; }
.info { font-size: 15px; line-height: 31px; color: #6a6c6f; white-space: nowrap; }
.name, .files b { letter-spacing: -.3px; }
.info { letter-spacing: -.1px; }

.settings { margin-left: 39px; }
.formats { width: 727px; height: 47px; border-radius: 10px; display: flex; background: linear-gradient(#f7f7f7, #cfd1d7 55%, #ececf1); box-shadow: 0 2px 1px #80868c; overflow: hidden; font: bold 18.75px/45px "Liberation Sans", Arial, sans-serif; color: #737373; text-shadow: 0 1px 0 #fff; }
.formats a { border-right: 1px solid #a5a8ad; text-align: center; padding-right: 1px; }
.formats .c84 { width: 84px; padding-left: 5px; } .c76 { width: 76px; } .c182 { width: 182px; } .c78 { width: 78px; } .c72 { width: 72px; } .c75 { width: 75px; }
.formats .on { background: linear-gradient(#515763, #6a7282 30%, #778393); color: #eee; text-shadow: 0 -1px 0 #222; border-bottom: 1px solid #c9ccd0; }
.formats .more { flex: 1; border: 0; display: flex; justify-content: space-between; padding: 0 21px 0 19px; }
.more svg { margin-top: 16px; }
.quality-row { display: flex; margin-top: 25px; }
.quality { margin: 0; padding: 0; border: 1px solid #c6cbd0; border-radius: 12px; width: 722px; height: 130px; min-width: 0; }
.quality legend { margin: 0 auto; padding: 2px 6px 0; font-weight: 700; font-size: 16px; line-height: 19px; color: #666; text-shadow: 0 1px 0 #d5d9dd; }
.slider { margin: 7px 0 0 43px; }
.marks { display: grid; grid-template-columns: 95px 317px 106px 202px; padding-top: 1px; }
.marks div { text-align: center; font-size: 17.3px; line-height: 20px; color: #525456; letter-spacing: -.15px; }
.marks div:nth-child(2) { padding-right: 2px; }
.marks div:last-child { padding-left: 100px; }
.marks small { display: block; font-size: 15px; color: #6a6c6f; }
.buttons { margin: 8px 0 0 25px; display: flex; flex-direction: column; gap: 8px; }
.buttons button { width: 211px; height: 43px; border: 0; border-radius: 22px; font: bold 16.25px "Liberation Sans", Arial, sans-serif; letter-spacing: .1px; color: #666; text-shadow: 0 1px 0 #fff; background: linear-gradient(#e9e9ea, #d3d5d8 40%, #bdc2cb 65%, #d6d9da); box-shadow: 0 1px 2px #777, inset 0 1px 0 #f5f5f5; }
.buttons button:disabled { color: #999; }

.taskbar { height: 58px; flex: none; border-top: 1px solid #48464b; padding-bottom: 2px; display: flex; background: linear-gradient(90deg, #242227 0, #232226 400px, #281d2d 490px, #241f28 640px, #2a1d30 800px, #232226 950px, #232226 1330px, #2b1a37 1450px, #261e2c 1560px, #222127 1660px, #201d33 1919px); align-items: center; }
.weather { display: flex; gap: 4px; margin-left: 24px; width: 506px; margin-top: -2px; }
.weather div, .clock { display: flex; flex-direction: column; line-height: 20px; letter-spacing: -.15px; }
.clock { margin-top: -2px; }
.cond { color: #c4c2c6; }
.search { margin-left: 17px; width: 275px; height: 40px; border-radius: 20px; background: linear-gradient(90deg, #3f3d41, #45394a); border: 1px solid #55505a; display: flex; align-items: center; padding: 0 7px 0 14px; }
.search span { margin-left: 12px; font-size: 17px; color: #d0ced2; letter-spacing: -.4px; }
.beach { margin-left: auto; }
.apps { display: flex; margin-left: 5px; gap: 5px; }
.app { width: 50px; height: 50px; display: grid; place-items: center; position: relative; border-radius: 6px; }
.active { background: #323136; box-shadow: inset 0 0 0 1px #3e3c42; }
.run::after, .active::after { content: ""; position: absolute; bottom: 1px; left: 21px; width: 8px; height: 4px; border-radius: 2px; background: #9b999e; }
.active::after { left: 15px; width: 20px; background: #d3a9da; }
.badge { position: absolute; font-size: 14px; line-height: 20px; text-align: center; letter-spacing: -.5px; }
.big { left: 23px; top: 4px; width: 26px; height: 20px; border-radius: 10px; background: #d5a9dc; color: #151515; }
.red { left: 27px; top: 5px; width: 18px; height: 18px; border-radius: 9px; background: #ee4f55; font-size: 12px; line-height: 18px; }
.tray { display: flex; align-items: center; margin-left: 105px; }
.sound { fill: none; stroke: #fff; stroke-width: 1.3; }
.vol1 { margin-left: 22px; } .lang { margin-left: 23px; width: 29px; letter-spacing: -.3px; }
.wifi { margin-left: 23px; } .vol2 { margin-left: 9px; } .bat { margin-left: 10px; }
.clock { width: 97px; text-align: right; }
.bell { margin-left: 11px; } .pre { margin-left: 23px; }
```
